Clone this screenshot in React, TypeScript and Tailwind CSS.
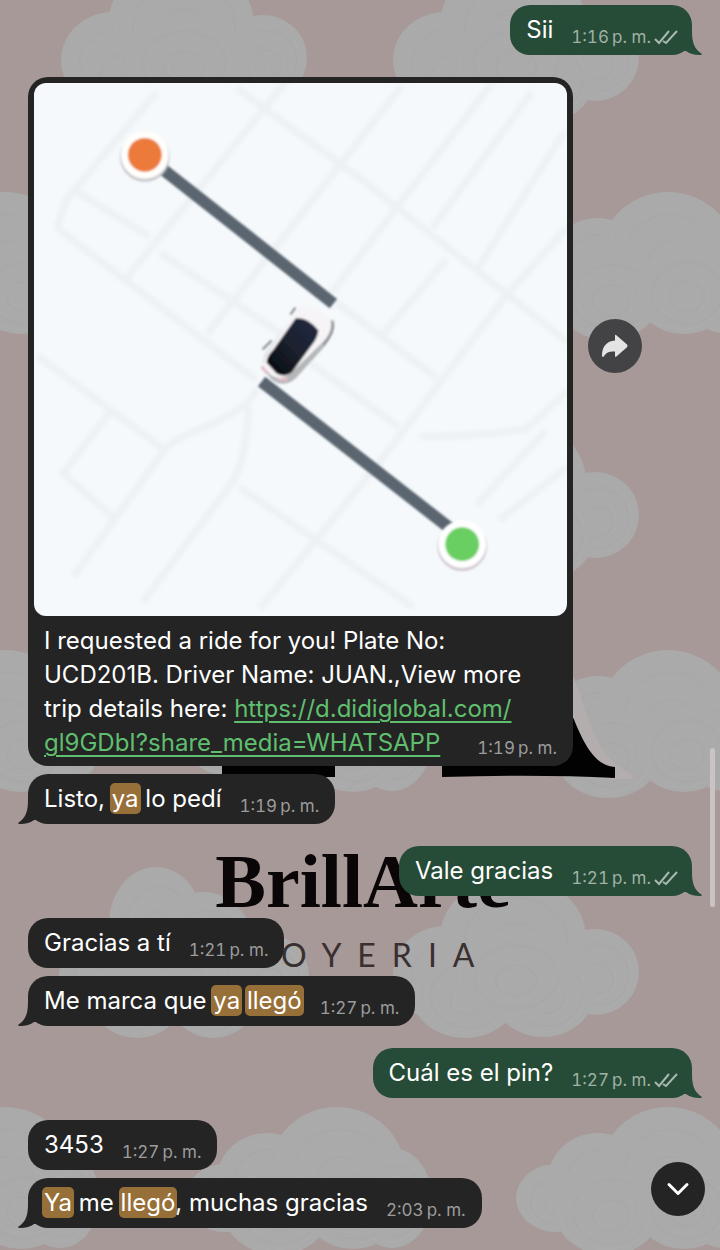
import type { ReactNode } from 'react'

type Lobe = [cx: number, cy: number, rx: number, ry: number]

// lobes are relative to the cloud's own origin
const wideCloud: Lobe[] = [
  [-112, 91, 40, 34],
  [-70, 72, 50, 46],
  [0, 65, 68, 65],
  [55, 91, 40, 50],
  [-60, 102, 54, 46],
  [16, 98, 50, 44],
]

const tallCloud: Lobe[] = [
  [52, 60, 52, 48],
  [202, 58, 44, 43],
  [120, 24, 73, 62],
  [72, 79, 54, 45],
  [150, 77, 52, 46],
  [120, 60, 60, 45],
]

const smallCloud: Lobe[] = [
  [40, 62, 42, 42],
  [206, 62, 42, 42],
  [95, 10, 47, 57],
  [142, 30, 50, 52],
  [76, 84, 46, 40],
  [152, 84, 44, 40],
  [115, 60, 70, 50],
]

const clouds: { x: number; y: number; lobes: Lobe[] }[] = [
  { x: 61, y: 0, lobes: tallCloud },
  { x: 393, y: 0, lobes: tallCloud },
  { x: 5, y: 192, lobes: wideCloud },
  { x: 337, y: 192, lobes: wideCloud },
  { x: 668, y: 192, lobes: wideCloud },
  { x: 61, y: 457, lobes: tallCloud },
  { x: 393, y: 457, lobes: tallCloud },
  { x: 5, y: 650, lobes: wideCloud },
  { x: 337, y: 650, lobes: wideCloud },
  { x: 668, y: 650, lobes: wideCloud },
  { x: 61, y: 914, lobes: smallCloud },
  { x: 393, y: 914, lobes: tallCloud },
  { x: 5, y: 1107, lobes: wideCloud },
  { x: 337, y: 1107, lobes: wideCloud },
  { x: 668, y: 1107, lobes: wideCloud },
]

const rings = [0.86, 0.7, 0.52, 0.34, 0.18]

function Wallpaper() {
  return (
    <svg
      className="absolute inset-0 h-full w-full"
      viewBox="0 0 720 1250"
      preserveAspectRatio="xMidYMin slice"
      aria-hidden="true"
    >
      <rect width="720" height="1250" fill="#a79997" />
      {clouds.map((cloud, i) => (
        <g key={i} transform={`translate(${cloud.x} ${cloud.y})`}>
          {cloud.lobes.map(([cx, cy, rx, ry], j) => (
            <g key={j}>
              <ellipse cx={cx} cy={cy} rx={rx} ry={ry} fill="#aaaaaa" />
              {rings.map((r, k) => (
                <ellipse
                  key={r}
                  cx={cx + (k % 2 ? 3 : -2)}
                  cy={cy + (1 - r) * 10}
                  rx={rx * r}
                  ry={ry * r}
                  fill="none"
                  stroke={k % 2 ? '#a4a4a4' : '#b0b0b0'}
                  strokeWidth="1.5"
                  opacity="0.4"
                />
              ))}
            </g>
          ))}
        </g>
      ))}

      {/* Store logo */}
      <path d="M573 676C586 704 592 758 632 774V779H600L565 730Z" fill="#b3adae" />
      <path d="M222 760H335V777H222Z" fill="#020202" />
      <path d="M442 760H560V700H566C580 734 590 765 615 767V778Q540 774 442 777Z" fill="#020202" />
      <text
        x="363"
        y="907"
        textAnchor="middle"
        fill="#0a0506"
        className="font-['Liberation_Serif',serif] text-[76px] font-bold"
      >
        BrillArte
      </text>
      <text
        x="371"
        y="967"
        textAnchor="middle"
        fill="#3a2f2f"
        className="font-[Lato,sans-serif] text-[32px] tracking-[16px]"
      >
        JOYERIA
      </text>
    </svg>
  )
}

const streets = [
  'M23 145L223 298',
  'M43 109L116 154M126 170L249 252M276 280L366 345',
  'M253-2L93 195',
  'M369 2L266 134L173 252',
  'M459 0L299 209',
  'M203 5L326 95L534 259',
  'M499 9L399 145M413 177L349 252',
  'M532 48L443 188',
  'M534 145L473 213L346 380L226 527',
  'M303 220L403 295',
  'M386 354Q433 355 493 347L534 309',
  'M513 348L443 423M534 385L466 438',
  'M3 273L129 366',
  'M223 305Q220 325 163 348Q135 360 129 370L39 495',
  'M215 325Q212 385 195 405L109 520',
  'M76 330L29 391L83 438',
  'M206 405L380 525',
  'M23 145L33 116L123 9',
]

function RideMap() {
  return (
    <svg className="block w-full rounded-xl bg-[#f5f9fc]" viewBox="0 0 534 534" role="img" aria-label="Ride map">
      <defs>
        <filter id="soft" x="-20%" y="-20%" width="140%" height="140%">
          <feGaussianBlur stdDeviation="2" />
        </filter>
        <filter id="edge" x="-20%" y="-20%" width="140%" height="140%">
          <feGaussianBlur stdDeviation="0.9" />
        </filter>
        <linearGradient id="roof" x1="1" y1="0" x2="0" y2="1">
          <stop offset="0" stopColor="#232a44" />
          <stop offset="0.5" stopColor="#1b212e" />
          <stop offset="1" stopColor="#05070c" />
        </linearGradient>
      </defs>
      <g fill="none" stroke="#edf1f3" strokeWidth="7" filter="url(#soft)">
        {streets.map((d) => (
          <path key={d} d={d} />
        ))}
      </g>
      <g fill="none" stroke="#5a656f" strokeWidth="12" filter="url(#edge)">
        <path d="M126 84L300 221" />
        <path d="M228 299L418 447" />
      </g>

      {/* Car */}
      <g filter="url(#edge)">
        <path
          d="M262 230Q268 220 284 228L298 238Q302 250 291 264L262 296Q250 306 238 297L230 287Q227 278 235 267Z"
          fill="#b4b6b7"
        />
        <path
          d="M262 229Q268 219 284 227L297 237Q300 247 291 258L257 291Q248 299 238 293L230 286Q227 279 238 264Z"
          fill="#f6f4f6"
        />
        <path d="M262 236Q274 234 285 248Q284 256 278 263L259 289Q252 296 243 291L233 280Q233 274 240 267Z" fill="url(#roof)" />
        <path d="M257 232L262 225M229 267L238 258M299 238Q302 250 290 262" stroke="#81858a" strokeWidth="2" fill="none" />
        <path d="M228 284L234 291M244 297L254 297" stroke="#e4bcc8" strokeWidth="3" />
      </g>

      <g filter="url(#edge)">
        <circle cx="111" cy="74" r="25" fill="#c9c9cf" />
        <circle cx="111" cy="72" r="24" fill="#fffefa" />
        <circle cx="111" cy="72" r="17" fill="#ec7a3a" />
        <circle cx="429" cy="464" r="25" fill="#d3c9d3" />
        <circle cx="429" cy="462" r="24" fill="#fff" />
        <circle cx="429" cy="462" r="17" fill="#6bcf62" />
      </g>
    </svg>
  )
}

function Checks() {
  return (
    <svg className="h-4 w-6" viewBox="0 0 24 16" fill="none" stroke="#a8b9ae" strokeWidth="2" role="img" aria-label="Delivered">
      <path d="M1 10L5 14L15 2" />
      <path d="M9 12L12 14L23 2" />
    </svg>
  )
}

function Mark({ children }: { children: ReactNode }) {
  return <mark className="-mx-0.5 rounded-[5px] bg-[#976f38] px-0.5 py-px text-white">{children}</mark>
}

type MessageProps = {
  time: string
  mine?: boolean
  tail?: boolean
  children: ReactNode
}

function Message({ time, mine, tail, children }: MessageProps) {
  return (
    <div className={mine ? 'flex justify-end' : 'flex'}>
      <div
        className={`relative flex h-[50px] items-end gap-[18px] rounded-[20px] pl-4 ${
          mine ? 'bg-[#264b37] pr-3.5' : 'bg-[#242424] pr-4'
        }`}
      >
        <p className="pb-2 text-[24px] leading-[34px] text-white">{children}</p>
        <div className="flex items-center gap-[3px] pb-1.5">
          <Time mine={mine}>{time}</Time>
          {mine && <Checks />}
        </div>
        {tail && (
          <svg
            className={`absolute bottom-0 h-6 w-5 ${mine ? '-right-2.5 -scale-x-100' : '-left-2.5'}`}
            viewBox="0 0 20 24"
            fill={mine ? '#264b37' : '#242424'}
            aria-hidden="true"
          >
            <path d="M10 0C10 11 8 18 0 23Q0 24 2 24Q11 24 16 20L20 20V0Z" />
          </svg>
        )}
      </div>
    </div>
  )
}

function Time({ mine, children }: { mine?: boolean; children: ReactNode }) {
  return (
    <time className={`text-[17px] leading-6 whitespace-nowrap tabular-nums ${mine ? 'text-[#a0b2a6]' : 'text-[#9c9c9c]'}`}>
      {children}&#8201;p. m.
    </time>
  )
}

export default function App() {
  return (
    <main className="relative min-h-screen overflow-hidden bg-[#a79997] font-[Inter,sans-serif]">
      <Wallpaper />

      <div className="relative flex flex-col gap-[22px] px-7 pt-[5px] pb-[22px]">
        <Message time="1:16" mine tail>Sii</Message>

        <div className="flex flex-col gap-2">
          <div className="flex items-start gap-[15px]">
            <article className="w-full max-w-[545px] rounded-[20px] bg-[#242424] p-1.5">
              <RideMap />
              <p className="flow-root px-2.5 pt-2 text-[24px] leading-[34px] text-white">
                I requested a ride for you! Plate No: UCD201B. Driver Name: JUAN.,View more trip details here:{' '}
                <a
                  href="https://d.didiglobal.com/gl9GDbI?share_media=WHATSAPP"
                  className="text-[#5fbf6e] underline decoration-2 underline-offset-4"
                >
                  https://d.didiglobal.com/<wbr />gl9GDbI?share_media=WHATSAPP
                </a>
                <span className="float-right mt-2 leading-6">
                  <Time>1:19</Time>
                </span>
              </p>
            </article>
            <button
              type="button"
              aria-label="Forward"
              className="mt-[242px] flex size-[54px] shrink-0 items-center justify-center rounded-full bg-[#434345]"
            >
              <svg className="h-6 w-7" viewBox="0 0 28 24" fill="#e4e4e4" aria-hidden="true">
                <path d="M14 1.8Q14 0.2 15.4 1.2L26 10.6Q27.2 12 26 13.2L15.4 22.6Q14 23.6 14 22V17.4C8.500 17.200 5 18.400 2.800 22.400Q1.200 23.600 1 21.800C1 12.800 5.500 7.200 14 6.600Z" />
              </svg>
            </button>
          </div>

          <Message time="1:19" tail>
            Listo, <Mark>ya</Mark> lo pedí
          </Message>
        </div>

        <Message time="1:21" mine tail>Vale gracias</Message>

        <div className="flex flex-col gap-2">
          <Message time="1:21">Gracias a tí</Message>
          <Message time="1:27" tail>
            Me marca que <Mark>ya</Mark> <Mark>llegó</Mark>
          </Message>
        </div>

        <Message time="1:27" mine tail>Cuál es el pin?</Message>

        <div className="flex flex-col gap-2">
          <Message time="1:27">3453</Message>
          <Message time="2:03" tail>
            <Mark>Ya</Mark> me <Mark>llegó</Mark>, muchas gracias
          </Message>
        </div>
      </div>

      {/* Scroll thumb */}
      <div className="absolute top-[748px] right-[5px] h-[159px] w-[5px] rounded-full bg-[#cbc3c3]" />

      <button
        type="button"
        aria-label="Scroll to latest"
        className="absolute right-[15px] bottom-[34px] flex size-[54px] items-center justify-center rounded-full bg-[#242424]"
      >
        <svg
          className="h-3.5 w-6"
          viewBox="0 0 24 14"
          fill="none"
          stroke="white"
          strokeWidth="3"
          strokeLinecap="round"
          strokeLinejoin="round"
          aria-hidden="true"
        >
          <path d="M3 2.500L12 11.500L21 2.500" />
        </svg>
      </button>
    </main>
  )
}
